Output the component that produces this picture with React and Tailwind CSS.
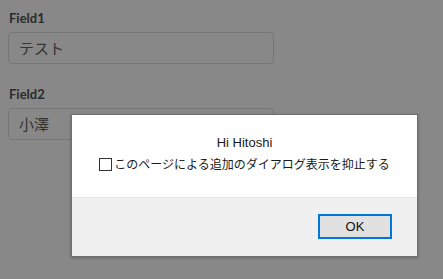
import React from 'react';

const FIELDS = [
  { label: 'Field1', value: 'テスト' },
  { label: 'Field2', value: '小澤' },
];

const App = () => {
  return (
    <div className="relative w-[443px] h-[279px] overflow-hidden bg-[#888888]" style={{ fontFamily: 'Lato, "Noto Sans CJK JP", sans-serif' }}>
      {/* Page underneath the overlay */}
      <div className="flex flex-col gap-[22px] pt-[10px] pl-[8px]">
        {FIELDS.map((f) => (
          <div key={f.label} className="flex flex-col gap-[6px]">
            <span className="pl-px text-[13px] leading-4 font-bold text-[#2b2b2b]">{f.label}</span>
            <div className="w-[266px] h-[32px] flex items-center px-[10px] rounded-[4px] border border-[#767676] text-[15px] text-[#333333]" style={{ fontFamily: '"Noto Sans CJK JP", sans-serif' }}>
              {f.value}
            </div>
          </div>
        ))}
      </div>

      {/* Alert dialog */}
      <div
        className="absolute left-[71px] top-[114px] w-[347px] h-[143px] flex flex-col bg-white border border-[#6e6e6e] shadow-[0_1px_3px_rgba(0,0,0,0.25)]"
        style={{ fontFamily: '"Noto Sans CJK JP", "Liberation Sans", sans-serif' }}
      >
        <div className="h-[82px] flex flex-col items-center pt-[20px] gap-[5px] text-[12px] text-[#1a1a1a]">
          <span className="text-[13px] leading-[16px]" style={{ fontFamily: '"Liberation Sans", sans-serif' }}>Hi Hitoshi</span>
          <label className="flex items-center gap-[2px] leading-[16px]">
            <span className="w-[13px] h-[13px] border border-[#333333] bg-white" />
            <span>このページによる追加のダイアログ表示を抑止する</span>
          </label>
        </div>
        <div className="flex-1 flex items-center justify-end pr-[25px] pb-px bg-[#f0f0f0] border-t border-[#e3e3e3]">
          <button className="w-[74px] h-[25px] bg-[#e1e1e1] border-2 border-[#0078d7] text-[13px] text-[#111111]" style={{ fontFamily: '"Liberation Sans", sans-serif' }}>
            OK
          </button>
        </div>
      </div>
    </div>
  );
};

export default App;
